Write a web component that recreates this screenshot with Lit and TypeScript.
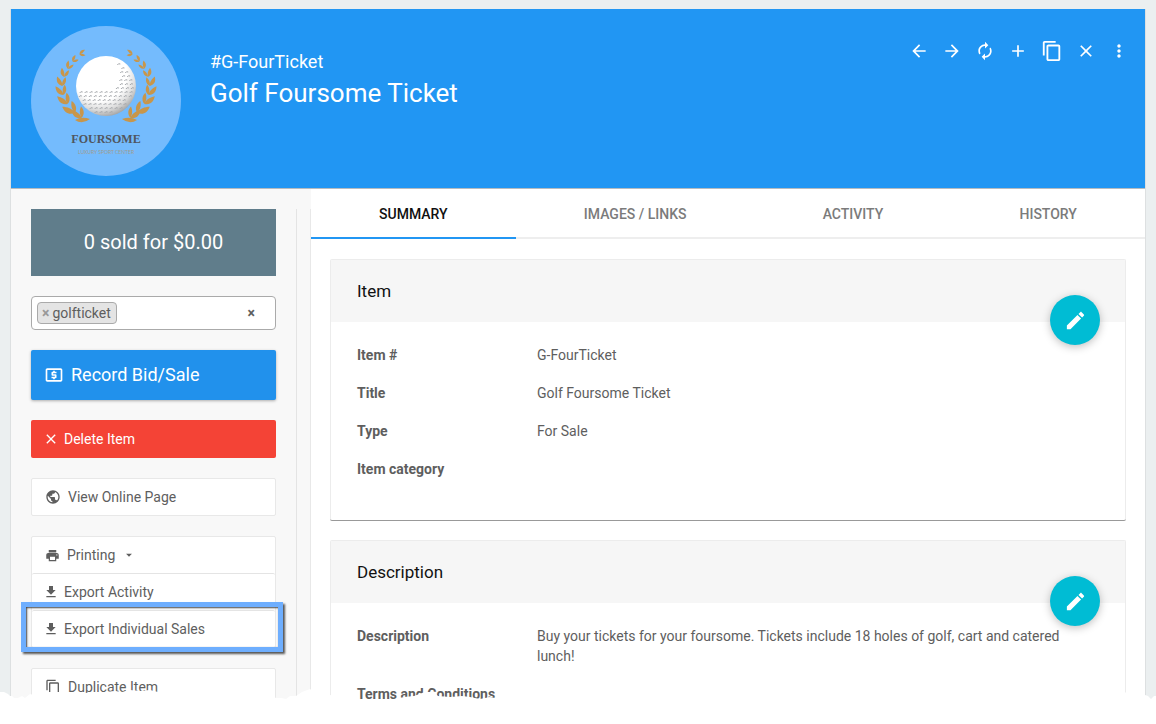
import { LitElement, html, css, svg } from "lit";
import { customElement } from "lit/decorators.js";

const icons = {
  back: "M20 11H7.83l5.59-5.59L12 4l-8 8 8 8 1.41-1.41L7.83 13H20v-2z",
  forward: "M12 4l-1.41 1.41L16.17 11H4v2h12.17l-5.58 5.59L12 20l8-8z",
  refresh:
    "M12 6v3l4-4-4-4v3c-4.42 0-8 3.58-8 8 0 1.57.46 3.03 1.24 4.26L6.7 14.8c-.45-.83-.7-1.79-.7-2.8 0-3.31 2.69-6 6-6zm6.76 1.74L17.3 9.2c.44.84.7 1.79.7 2.8 0 3.31-2.69 6-6 6v-3l-4 4 4 4v-3c4.42 0 8-3.58 8-8 0-1.57-.46-3.03-1.24-4.26z",
  add: "M19 13h-6v6h-2v-6H5v-2h6V5h2v6h6v2z",
  copy: "M16 1H4c-1.1 0-2 .9-2 2v14h2V3h12V1zm3 4H8c-1.1 0-2 .9-2 2v14c0 1.1.9 2 2 2h11c1.1 0 2-.9 2-2V7c0-1.1-.9-2-2-2zm0 16H8V7h11v14z",
  close:
    "M19 6.41L17.59 5 12 10.59 6.41 5 5 6.41 10.59 12 5 17.59 6.41 19 12 13.41 17.59 19 19 17.59 13.41 12z",
  more: "M12 8c1.1 0 2-.9 2-2s-.9-2-2-2-2 .9-2 2 .9 2 2 2zm0 2c-1.1 0-2 .9-2 2s.9 2 2 2 2-.9 2-2-.9-2-2-2zm0 6c-1.1 0-2 .9-2 2s.9 2 2 2 2-.9 2-2-.9-2-2-2z",
  money:
    "M11 17h2v-1h1c.55 0 1-.45 1-1v-3c0-.55-.45-1-1-1h-3v-1h4V8h-2V7h-2v1h-1c-.55 0-1 .45-1 1v3c0 .55.45 1 1 1h3v1H9v2h2v1zm9-13H4c-1.11 0-1.99.89-1.99 2L2 18c0 1.11.89 2 2 2h16c1.11 0 2-.89 2-2V6c0-1.11-.89-2-2-2zm0 14H4V6h16v12z",
  globe:
    "M12 2C6.48 2 2 6.48 2 12s4.48 10 10 10 10-4.48 10-10S17.52 2 12 2zm-1 17.93c-3.95-.49-7-3.85-7-7.93 0-.62.08-1.21.21-1.79L9 15v1c0 1.1.9 2 2 2v1.93zm6.9-2.54c-.26-.81-1-1.39-1.9-1.39h-1v-3c0-.55-.45-1-1-1H8v-2h2c.55 0 1-.45 1-1V7h2c1.1 0 2-.9 2-2v-.41c2.93 1.19 5 4.06 5 7.41 0 2.08-.8 3.97-2.1 5.39z",
  print:
    "M19 8H5c-1.66 0-3 1.34-3 3v6h4v4h12v-4h4v-6c0-1.66-1.34-3-3-3zm-3 11H8v-5h8v5zm3-7c-.55 0-1-.45-1-1s.45-1 1-1 1 .45 1 1-.45 1-1 1zm-1-9H6v4h12V3z",
  caret: "M7 10l5 5 5-5z",
  download: "M19 9h-4V3H9v6H5l7 7 7-7zM5 18v2h14v-2H5z",
  edit: "M3 17.25V21h3.75L17.81 9.94l-3.75-3.75L3 17.25zM20.71 7.04c.39-.39.39-1.02 0-1.41l-2.34-2.34c-.39-.39-1.02-.39-1.41 0l-1.83 1.83 3.75 3.75 1.83-1.83z",
};

const icon = (name: keyof typeof icons, size = 16) =>
  html`<svg width=${size} height=${size} viewBox="0 0 24 24" fill="currentColor" aria-hidden="true">
    <path d=${icons[name]}></path>
  </svg>`;

const tabs = ["Summary", "Images / Links", "Activity", "History"];

const tools: [keyof typeof icons, string, number][] = [
  ["back", "Previous", 20],
  ["forward", "Next", 20],
  ["refresh", "Refresh", 20],
  ["add", "Add", 20],
  ["copy", "Duplicate", 22],
  ["close", "Close", 20],
  ["more", "More", 20],
];

const panels = [
  {
    title: "Item",
    rows: [
      ["Item #", "G-FourTicket"],
      ["Title", "Golf Foursome Ticket"],
      ["Type", "For Sale"],
      ["Item category", ""],
    ],
  },
  {
    title: "Description",
    rows: [
      [
        "Description",
        "Buy your tickets for your foursome. Tickets include 18 holes of golf, cart and catered lunch!",
      ],
      ["Terms and Conditions", ""],
    ],
  },
];

/* One branch of the laurel: base point, heading and size of every leaf pair. */
const leaves: [number, number, number, number][] = [
  [50, 91, 32, 11],
  [43, 86, 44, 12],
  [36, 77, 34, 11],
  [32, 68, 22, 10],
  [31, 59, 8, 9],
  [33, 50, -8, 8],
  [37, 42, -26, 7],
  [42, 35, -44, 6],
  [49, 28, -72, 6],
];

const branch = svg`
  ${leaves.map(
    ([x, y, a, s]) => svg`<g transform="translate(${x} ${y}) rotate(${-a}) scale(${s / 10})">
      <path d="M0 1C-5-1-6-5-4-10C-1-7 1-3 0 1Z"></path>
      <path d="M0 1C0-3 2-6 5-8C6-4 4 0 0 1Z"></path>
    </g>`
  )}
  <path d="M44 94q7-4 15-1q-8 6-15 1Z"></path>`;

const dimples = Array.from({ length: 13 }, (_, r) => {
  const y = 38 + r * 4;
  const half = Math.sqrt(Math.max(0, 28 * 28 - (y - 60) * (y - 60))) - 1;
  const from = r < 7 ? 75 + half - 3 - r * 2 : 75 - half;
  const out = [];
  for (let x = from + (r % 2) * 2; x <= 75 + half; x += 5)
    out.push(svg`<path d="M${x - 2} ${y + 1}q1-2 3-1"></path>`);
  return out;
});

@customElement("item-logo")
export class ItemLogo extends LitElement {
  static styles = css`
    :host {
      display: block;
      width: 150px;
      height: 150px;
      flex: none;
    }
    svg {
      display: block;
    }
    .name {
      font: 700 12px "Liberation Serif", serif;
    }
    .sub {
      font: 5px Lato, sans-serif;
    }
  `;
  render() {
    return html`<svg width="150" height="150" viewBox="0 0 150 150" role="img" aria-label="Foursome logo">
      <defs>
        <radialGradient id="ball" cx="0.4" cy="0.3" r="0.75">
          <stop offset="0.6" stop-color="#fff"></stop>
          <stop offset="0.8" stop-color="#dcdcdc"></stop>
          <stop offset="1" stop-color="#999"></stop>
        </radialGradient>
      </defs>
      <circle cx="75" cy="75" r="75" fill="#74bbfd"></circle>
      <g fill="#c8964a">
        ${branch}
        <g transform="translate(150 0) scale(-1 1)">${branch}</g>
      </g>
      <circle cx="75" cy="60" r="30" fill="url(#ball)"></circle>
      <g fill="none" stroke="#a3a6aa" stroke-width="1">${dimples}</g>
      <text class="name" x="75" y="117" text-anchor="middle" fill="#4f5660">FOURSOME</text>
      <text class="sub" x="75" y="128" text-anchor="middle" fill="#a09c90">LUXURY SPORT CENTER</text>
    </svg>`;
  }
}

@customElement("app-root")
export class AppRoot extends LitElement {
  static styles = css`
    :host {
      display: block;
      position: relative;
      height: 100vh;
      overflow: hidden;
      box-sizing: border-box;
      padding: 9px 10px 0;
      background: #ebeff0;
      font: 14px/20px Roboto, sans-serif;
      color: #5e5e5e;
    }
    * {
      box-sizing: border-box;
    }
    svg {
      display: block;
      flex: none;
    }
    button {
      font: inherit;
      color: inherit;
      border: 0;
      margin: 0;
      padding: 0;
      background: none;
      text-align: left;
      cursor: pointer;
    }
    h1,
    h2,
    p,
    dl,
    dd {
      margin: 0;
    }
    .page {
      border: solid #dde0e1;
      border-width: 0 1px;
      background: #fff;
    }
    .header {
      display: flex;
      gap: 29px;
      padding: 17px 16px 12px 20px;
      background: #2196f3;
      border-bottom: 1px solid #b5bbc0;
      color: #fff;
    }
    .titles {
      flex: 1;
      padding-top: 23px;
    }
    .code {
      font-size: 18px;
      line-height: 26px;
    }
    .titles h1 {
      font-size: 26px;
      line-height: 36px;
      font-weight: 400;
    }
    .tools {
      display: flex;
      align-items: center;
      align-self: flex-start;
      padding-top: 14px;
      gap: 13px;
    }
    .body {
      display: flex;
    }
    .side {
      flex: none;
      display: flex;
      width: 300px;
      padding-top: 20px;
      background: #f8f8f8;
    }
    .rail {
      flex: 1;
      display: flex;
      border-right: 1px solid #e8e8e8;
    }
    .stack {
      width: 286px;
      padding: 0 20px;
      border-right: 1px solid #e4e4e4;
      display: flex;
      flex-direction: column;
      gap: 20px;
    }
    .sold {
      background: #607d8b;
      color: #fff;
      font-size: 20px;
      line-height: 67px;
      text-align: center;
    }
    .tags {
      display: flex;
      align-items: center;
      justify-content: space-between;
      height: 34px;
      padding: 0 20px 0 5px;
      background: #fff;
      border: 1px solid #aaa;
      border-radius: 4px;
    }
    .tag {
      display: flex;
      align-items: center;
      gap: 3px;
      height: 22px;
      padding: 0 5px 0 4px;
      background: #e4e4e4;
      border: 1px solid #aaa;
      border-radius: 4px;
    }
    .tag button {
      color: #999;
      font-weight: 700;
    }
    .clear {
      font-weight: 700;
    }
    .btn {
      display: flex;
      align-items: center;
      width: 100%;
      height: 38px;
      gap: 7px;
      padding: 0 13px;
      border-radius: 2px;
      text-decoration: none;
      color: inherit;
    }
    .record {
      height: 50px;
      background: #2191ec;
      color: #fff;
      font-size: 18px;
      box-shadow: 0 1px 3px rgba(0, 0, 0, 0.3);
    }
    .delete {
      gap: 5px;
      padding: 0 12px;
      background: #f44336;
      color: #fff;
    }
    .card {
      background: #fff;
      border: 1px solid #e8e8e8;
      border-radius: 2px;
    }
    .card .btn {
      height: 36px;
    }
    .card .btn + .btn {
      border-top: 1px solid #e4e4e4;
      height: 37px;
    }
    .card .export {
      gap: 5px;
      padding: 0 11px;
    }
    .main {
      flex: 1;
      min-width: 0;
    }
    .tabs {
      display: flex;
    }
    .tab {
      flex: 1 1 auto;
      height: 50px;
      padding-top: 2px;
      border-bottom: 2px solid #eee;
      text-align: center;
      text-transform: uppercase;
      font-weight: 500;
      color: #7b7b7b;
    }
    .tab.on {
      color: #111;
      border-color: #2196f3;
    }
    .panels {
      display: grid;
      gap: 20px;
      padding: 20px 19px;
    }
    .panel {
      position: relative;
      border: solid #ececec;
      border-width: 1px 1px 0;
      border-radius: 2px;
      box-shadow: 0 1px 0 #999;
      padding-bottom: 41px;
    }
    .panel h2 {
      background: #f6f6f6;
      padding: 0 26px;
      font-size: 17px;
      line-height: 62px;
      font-weight: 400;
      color: #111;
    }
    .fab {
      position: absolute;
      right: 25px;
      top: 35px;
      width: 50px;
      height: 50px;
      border-radius: 50%;
      background: #00bcd4;
      color: #fff;
      display: grid;
      place-items: center;
      box-shadow: 0 2px 8px rgba(0, 0, 0, 0.25);
    }
    .panel dl {
      display: grid;
      grid-template-columns: 180px 1fr;
      row-gap: 18px;
      padding: 23px 26px 0;
    }
    .panel dt {
      font-weight: 700;
    }
    .mark {
      position: absolute;
      left: 21px;
      top: 602px;
      width: 262px;
      height: 50px;
      border: 5px solid #6eaefe;
      box-shadow: 2px 2px 2px #555, inset 1px 1px 2px #444;
      pointer-events: none;
    }
    .torn {
      position: absolute;
      left: 0;
      bottom: 0;
      pointer-events: none;
    }
  `;

  render() {
    return html`
      <div class="page">
        <header class="header">
          <item-logo></item-logo>
          <div class="titles">
            <p class="code">#G-FourTicket</p>
            <h1>Golf Foursome Ticket</h1>
          </div>
          <nav class="tools">
            ${tools.map(([n, label, s]) => html`<button aria-label=${label}>${icon(n, s)}</button>`)}
          </nav>
        </header>
        <div class="body">
          <aside class="side">
            <div class="rail">
              <div class="stack">
                <div class="sold">0 sold for $0.00</div>
                <div class="tags">
                  <span class="tag"><button aria-label="Remove golfticket">×</button>golfticket</span>
                  <button class="clear" aria-label="Clear tags">×</button>
                </div>
                <button class="btn record">${icon("money", 20)}Record Bid/Sale</button>
                <button class="btn delete">${icon("close")}Delete Item</button>
                <div class="card"><a class="btn" href="#">${icon("globe")}View Online Page</a></div>
                <div class="card">
                  <button class="btn">${icon("print", 15)}Printing ${icon("caret", 14)}</button>
                  <button class="btn export">${icon("download")}Export Activity</button>
                  <button class="btn export">${icon("download")}Export Individual Sales</button>
                </div>
                <div class="card"><button class="btn">${icon("copy")}Duplicate Item</button></div>
              </div>
            </div>
          </aside>
          <main class="main">
            <div class="tabs" role="tablist">
              ${tabs.map(
                (t, i) =>
                  html`<button class="tab ${i ? "" : "on"}" role="tab" aria-selected=${i === 0}>${t}</button>`
              )}
            </div>
            <div class="panels">
              ${panels.map(
                (p) => html`<section class="panel">
                  <h2>${p.title}</h2>
                  <button class="fab" aria-label="Edit ${p.title}">${icon("edit", 23)}</button>
                  <dl>${p.rows.map(([k, v]) => html`<dt>${k}</dt><dd>${v}</dd>`)}</dl>
                </section>`
              )}
            </div>
          </main>
        </div>
      </div>
      <div class="mark"></div>
      <svg class="torn" width="100%" height="36" viewBox="0 0 1156 36" preserveAspectRatio="none" aria-hidden="true">
        <path
          fill="#fff"
          d="M0 4L4 4L8 6L10 8L12 8L14 10L18 10L22 8L25 10L30 6L34 7L40 4L60 4L70 5L84 5L105 4L115 3L122 4L130 2L140 3L150 2L158 4L170 6L200 5L240 7L256 7L264 6L272 8L276 10L282 10L286 11L290 8L296 8L302 4L310 1L314 4L322 6L330 7L340 9L356 11L396 11L404 9L414 8L422 5L426 4L434 4L438 8L450 9L462 8L470 9L480 11L490 9L500 11L1060 11L1110 6L1130 4L1145 7L1148 8L1151 11L1154 8L1156 8V36H0Z"
        ></path>
      </svg>
    `;
  }
}
